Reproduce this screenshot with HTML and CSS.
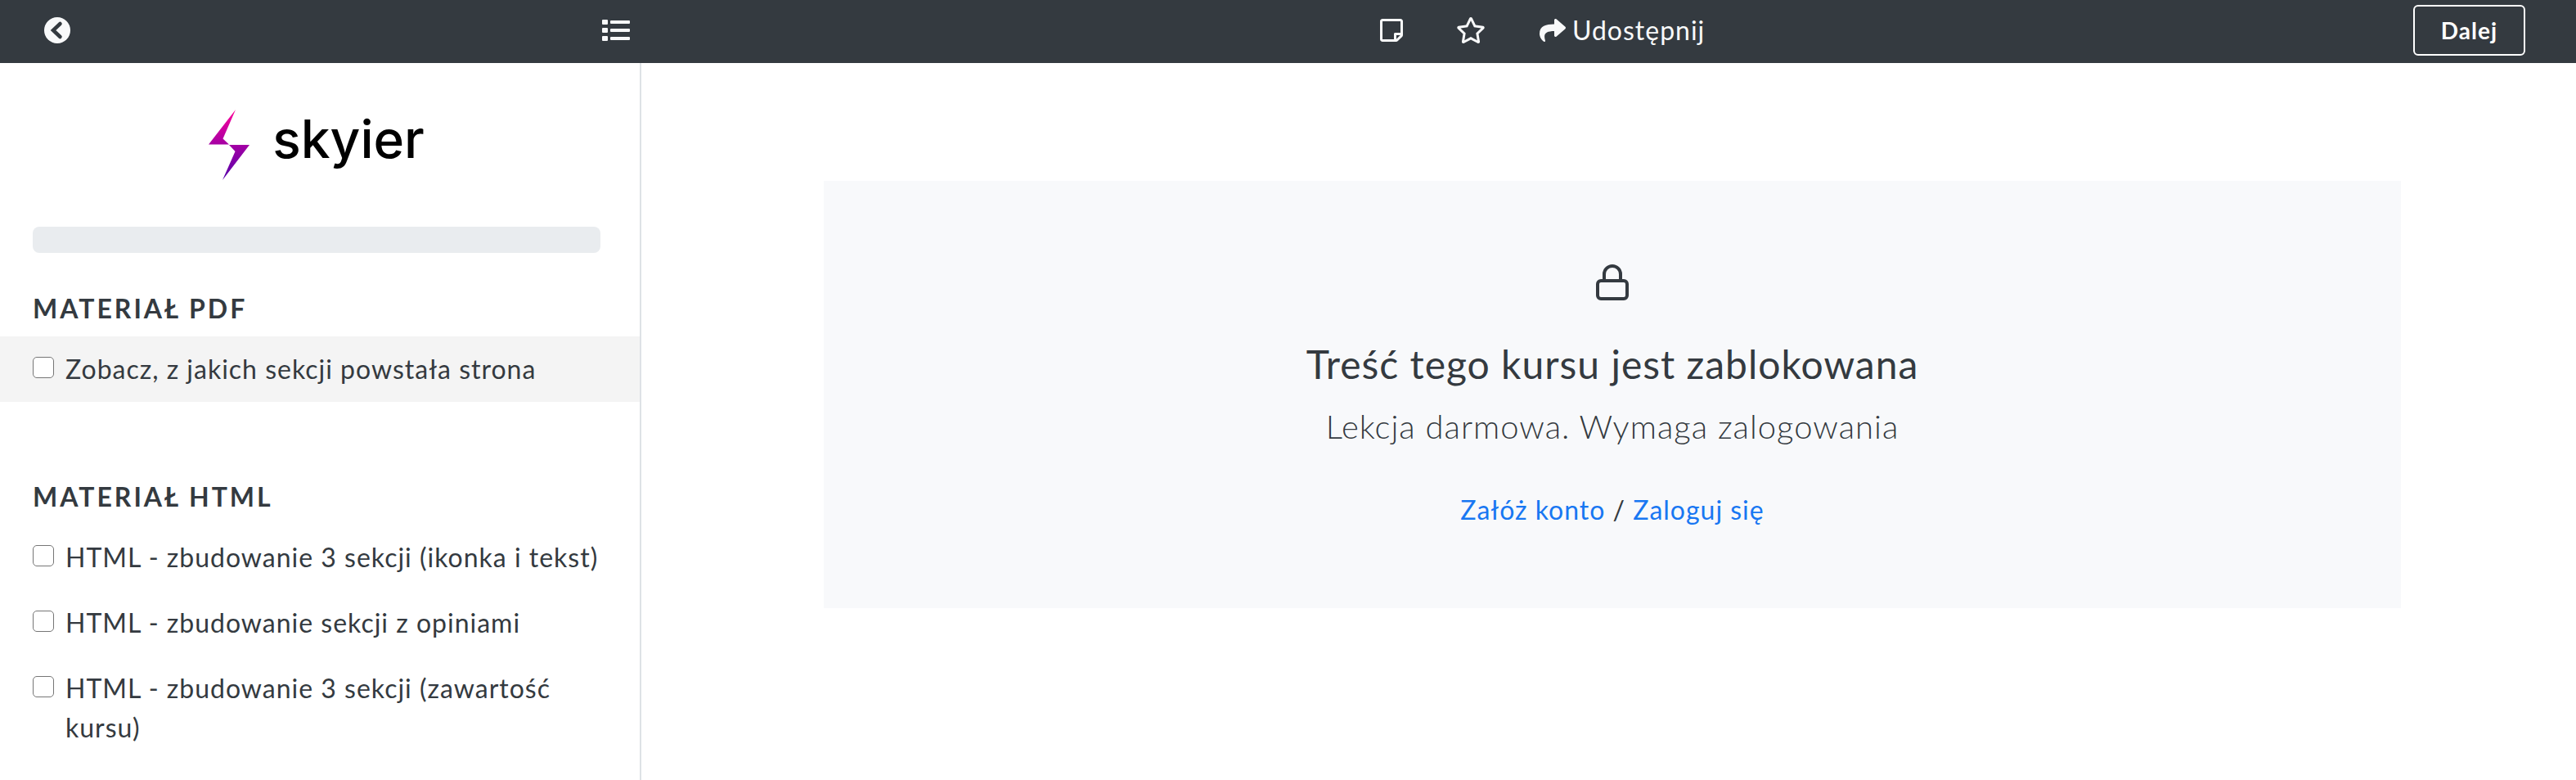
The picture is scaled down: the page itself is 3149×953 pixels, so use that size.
FILE: index.html
```html
<!DOCTYPE html>
<html lang="pl">
<head>
<meta charset="utf-8">
<title>Skyier</title>
<link rel="stylesheet" href="styles.css">
</head>
<body>
<header class="topbar">
  <div class="topbar-side">
    <a class="icon-link" href="#" aria-label="Wstecz"><svg class="icon" viewBox="0 0 32 32"><circle cx="16" cy="16" r="16" fill="currentColor"/><path d="M19.500 8 11 16l8.500 8" fill="none" stroke="#343a40" stroke-width="4.500" stroke-linecap="round"/></svg></a>
    <button class="icon-link" type="button" aria-label="Lista lekcji"><svg class="icon icon-list" viewBox="0 0 34 26" fill="currentColor"><rect width="7" height="6" rx="1"/><rect y="10" width="7" height="6" rx="1"/><rect y="20" width="7" height="6" rx="1"/><rect x="10" y="1" width="24" height="4" rx="1"/><rect x="10" y="11" width="24" height="4" rx="1"/><rect x="10" y="21" width="24" height="4" rx="1"/></svg></button>
  </div>
  <nav class="topbar-tools">
    <button class="icon-link" type="button" aria-label="Notatka"><svg class="icon icon-note" viewBox="0 0 448 448"><path fill="currentColor" d="M448 316V48c0-26.500-21.500-48-48-48H48C21.500 0 0 21.500 0 48v352c0 26.500 21.500 48 48 48h268.100c12.700 0 24.900-5.100 33.900-14.100l83.900-83.900c9-9 14.100-21.200 14.100-34zM320 396.100V320h76.100zM400 48v224H296c-13.300 0-24 10.700-24 24v104H48V48z"/></svg></button>
    <button class="icon-link" type="button" aria-label="Ulubione"><svg class="icon icon-star" viewBox="0 0 576 512"><path fill="currentColor" d="M528.100 171.500L382 150.200 316.700 17.800c-11.700-23.600-45.600-23.900-57.400 0L194 150.200 47.900 171.500c-26.200 3.800-36.700 36.100-17.700 54.600l105.700 103-25 145.500c-4.500 26.300 23.200 46 46.400 33.700L288 439.600l130.700 68.700c23.200 12.200 50.900-7.400 46.400-33.700l-25-145.500 105.700-103c19-18.500 8.500-50.800-17.700-54.600zM388.600 312.300l23.700 138.400L288 385.400l-124.300 65.300 23.700-138.400-100.600-98 139-20.200 62.200-126 62.200 126 139 20.200z"/></svg></button>
    <button class="icon-link share" type="button"><svg class="icon" viewBox="0 32 512 448"><path fill="currentColor" d="M503.691 189.836L327.687 37.851C312.281 24.546 288 35.347 288 56.015v80.053C127.371 137.907 0 170.100 0 322.326c0 61.441 39.581 122.309 83.333 154.132 13.653 9.931 33.111-2.533 28.077-18.631C66.066 312.814 132.917 274.316 288 272.085V360c0 20.700 24.300 31.453 39.687 18.164l176.004-152c11.071-9.562 11.086-26.753 0-36.328z"/></svg><span>Udostępnij</span></button>
  </nav>
  <button class="next" type="button">Dalej</button>
</header>
<div class="layout">
  <aside class="sidebar">
    <div class="logo">
      <svg class="bolt" viewBox="0 0 50 86"><defs><linearGradient id="bolt-fill" gradientUnits="userSpaceOnUse" x1="0" y1="0" x2="0" y2="86"><stop offset="0" stop-color="#ff0099"/><stop offset=".5" stop-color="#a400a4"/><stop offset="1" stop-color="#5500aa"/></linearGradient></defs><path fill="url(#bolt-fill)" d="M33 0 0 42.500h25L17.500 35.500zM25 43h25L17 86l15.500-35z"/></svg>
      <span class="wordmark">skyier</span>
    </div>
    <div class="progress" role="progressbar" aria-label="Postęp kursu" aria-valuenow="0" aria-valuemin="0" aria-valuemax="100"></div>
    <section class="chapter">
      <h2>MATERIAŁ PDF</h2>
      <label class="lesson active"><input type="checkbox"><span>Zobacz, z jakich sekcji powstała strona</span></label>
    </section>
    <section class="chapter">
      <h2>MATERIAŁ HTML</h2>
      <label class="lesson"><input type="checkbox"><span>HTML - zbudowanie 3 sekcji (ikonka i tekst)</span></label>
      <label class="lesson"><input type="checkbox"><span>HTML - zbudowanie sekcji z opiniami</span></label>
      <label class="lesson"><input type="checkbox"><span>HTML - zbudowanie 3 sekcji (zawartość kursu)</span></label>
    </section>
  </aside>
  <main class="content">
    <section class="locked">
      <svg class="lock" viewBox="0 0 40 44" fill="none" stroke="currentColor" stroke-width="4"><rect x="2" y="20" width="36" height="22" rx="4"/><path d="M10 20v-8a10 10 0 0 1 20 0v8"/></svg>
      <h1>Treść tego kursu jest zablokowana</h1>
      <p class="lead">Lekcja darmowa. Wymaga zalogowania</p>
      <p class="links"><a href="#">Załóż konto</a> / <a href="#">Zaloguj się</a></p>
    </section>
  </main>
</div>
</body>
</html>
```
FILE: styles.css
```css
* { box-sizing: border-box; }
body {
  margin: 0;
  min-height: 100vh;
  display: flex;
  flex-direction: column;
  font-family: Lato, "Noto Sans", sans-serif;
  font-size: 32px;
  line-height: 48px;
  letter-spacing: 1px;
  color: #343a40;
  background: #fff;
}
button { font: inherit; letter-spacing: inherit; }
h1, h2, p { margin: 0; }

.topbar {
  display: flex;
  align-items: center;
  height: 77px;
  flex: none;
  padding: 0 62px 4px 0;
  background: #343a40;
  color: #f8f9fa;
}
.topbar-side {
  width: 784px;
  flex: none;
  display: flex;
  align-items: center;
  justify-content: space-between;
  padding: 0 14px 0 54px;
}
.icon-link {
  display: flex;
  align-items: center;
  gap: 7px;
  padding: 0;
  border: 0;
  background: none;
  color: inherit;
}
.icon { display: block; width: 32px; height: 32px; }
.icon-list { width: 34px; height: 26px; }
.icon-note { width: 28px; height: 28px; }
.icon-star { width: 36px; height: 32px; }
.share .icon { width: 34px; height: 28px; }
.topbar-tools {
  flex: 1;
  display: flex;
  align-items: center;
  gap: 65px;
  padding-left: 903px;
}
.next {
  height: 62px;
  padding: 0 32px;
  border: 2px solid #fff;
  border-radius: 6px;
  background: none;
  color: #fff;
  font-size: 28px;
  font-weight: 700;
}

.layout { flex: 1; display: flex; }
.sidebar {
  width: 784px;
  flex: none;
  border-right: 2px solid #dee2e6;
}
.logo {
  display: flex;
  justify-content: center;
  align-items: center;
  gap: 28px;
  padding: 56px 48px 56px 40px;
  height: 200px;
}
.bolt { width: 50px; height: 86px; }
.wordmark {
  padding-bottom: 14px;
  font-family: Inter, sans-serif;
  font-size: 64px;
  font-weight: 500;
  letter-spacing: 0;
  color: #000;
}
.progress {
  height: 32px;
  margin: 0 48px 0 40px;
  border-radius: 8px;
  background: #e9ecef;
}
.chapter { padding-top: 38px; }
.chapter + .chapter { padding-top: 86px; }
.chapter h2 {
  padding: 6px 40px 10px;
  font-size: 32px;
  line-height: 48px;
  font-weight: 700;
  letter-spacing: 3px;
}
.lesson {
  display: flex;
  align-items: flex-start;
  gap: 14px;
  padding: 16px 40px;
}
.lesson.active { background: #f4f4f4; }
.lesson input {
  appearance: none;
  flex: none;
  width: 26px;
  height: 26px;
  margin: 9px 0 0;
  border: 1px solid #767676;
  border-radius: 5px;
  background: #fff;
}

.content { flex: 1; padding: 144px 214px 0 223px; }
.locked {
  display: flex;
  flex-direction: column;
  align-items: center;
  padding: 102px 32px 96px;
  background: #f8f9fb;
  text-align: center;
}
.lock { width: 40px; height: 44px; }
.locked h1 {
  margin-top: 48px;
  font-size: 48px;
  line-height: 60px;
  font-weight: 400;
}
.lead {
  margin-top: 16px;
  font-size: 40px;
  line-height: 60px;
  font-weight: 300;
}
.links { margin-top: 48px; }
.links a { color: #1877f2; text-decoration: none; }
```
